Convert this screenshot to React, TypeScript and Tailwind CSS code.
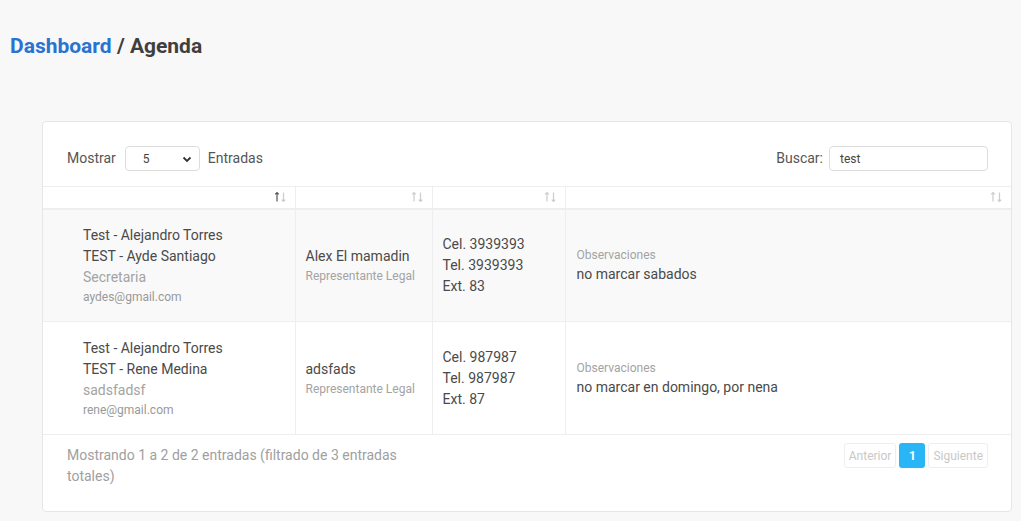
import React from "react";

// Agenda table rows shown after filtering by "test"
const ROWS = [
  {
    company: "Test - Alejandro Torres",
    contact: "TEST - Ayde Santiago",
    role: "Secretaria",
    email: "aydes@gmail.com",
    rep: "Alex El mamadin",
    cel: "3939393",
    tel: "3939393",
    ext: "83",
    notes: "no marcar sabados",
  },
  {
    company: "Test - Alejandro Torres",
    contact: "TEST - Rene Medina",
    role: "sadsfadsf",
    email: "rene@gmail.com",
    rep: "adsfads",
    cel: "987987",
    tel: "987987",
    ext: "87",
    notes: "no marcar en domingo, por nena",
  },
];

function SortIcon({ active = false }: { active?: boolean }) {
  return (
    <svg width="13" height="12" viewBox="0 0 13 12" className="shrink-0">
      {/* up arrow */}
      <path
        d="M3 1.5 L3 10.5 M1.2 3.3 L3 1.5 L4.8 3.3"
        fill="none"
        stroke={active ? "#555" : "#ccc"}
        strokeWidth="1.2"
      />
      {/* down arrow */}
      <path
        d="M9.5 1.5 L9.5 10.5 M7.7 8.7 L9.5 10.5 L11.3 8.7"
        fill="none"
        stroke="#ccc"
        strokeWidth="1.2"
      />
    </svg>
  );
}

export default function App() {
  return (
    <div
      className="min-h-screen bg-[#f8f8f8] pb-[10px] text-[#4a4a4a]"
      style={{ fontFamily: "Roboto, 'Liberation Sans', sans-serif" }}
    >
      {/* Breadcrumb title */}
      <h1 className="px-[10px] pt-[32px] text-[21px] font-bold leading-[28px]">
        <span className="text-[#2a72d1]">Dashboard</span>
        <span className="text-[#3f3f3f]"> / Agenda</span>
      </h1>

      <div className="ml-[42px] mr-[9px] mt-[61px] rounded-[4px] border border-[#e6e6e6] bg-white">
        {/* Controls */}
        <div className="flex items-center justify-between pl-[24px] pr-[23px] pt-[24px] pb-[15px] text-[14px] text-[#555]">
          <div className="flex items-center gap-[8px]">
            <span>Mostrar</span>
            <div className="ml-[1px] flex h-[25px] w-[75px] items-center justify-between rounded-[4px] border border-[#ddd] pl-[17px] pr-[6px] text-[12px] text-[#444]">
              <span>5</span>
              <svg width="12" height="12" viewBox="0 0 12 12">
                <path d="M2.5 4.5 L6 8 L9.5 4.5" fill="none" stroke="#333" strokeWidth="1.8" />
              </svg>
            </div>
            <span>Entradas</span>
          </div>
          <div className="flex items-center gap-[6px]">
            <span>Buscar:</span>
            <div className="flex h-[25px] w-[159px] items-center rounded-[4px] border border-[#ddd] px-[10px] text-[12px] text-[#444]">
              test
            </div>
          </div>
        </div>

        {/* Table */}
        <table className="w-full table-fixed border-collapse text-[14px] leading-[21px]">
          <colgroup>
            <col className="w-[252px]" />
            <col className="w-[137px]" />
            <col className="w-[133px]" />
            <col />
          </colgroup>
          <thead>
            <tr className="h-[22px] border-t border-b-2 border-[#eeeeee]">
              {[true, false, false, false].map((active, i) => (
                <th
                  key={i}
                  className={
                    "p-0 pr-[8px] align-middle " + (i < 3 ? "border-r border-[#eeeeee]" : "")
                  }
                >
                  <div className="flex justify-end">
                    <SortIcon active={active} />
                  </div>
                </th>
              ))}
            </tr>
          </thead>
          <tbody>
            {ROWS.map((r, i) => (
              <tr
                key={i}
                className={
                  "h-[113px] border-b border-[#eeeeee] " + (i === 0 ? "bg-[#f9f9f9]" : "bg-white")
                }
              >
                <td className="border-r border-[#eeeeee] pl-[40px] pt-[2px] align-middle">
                  <div>{r.company}</div>
                  <div>{r.contact}</div>
                  <div className="leading-[20px] text-[#a3a3a3]">{r.role}</div>
                  <div className="text-[12px] leading-[20px] text-[#999]">{r.email}</div>
                </td>
                <td className="border-r border-[#eeeeee] pl-[10px] align-middle">
                  <div>{r.rep}</div>
                  <div className="text-[12px] leading-[18px] text-[#a3a3a3]">
                    Representante Legal
                  </div>
                </td>
                <td className="border-r border-[#eeeeee] pl-[10px] align-middle">
                  <div>Cel. {r.cel}</div>
                  <div>Tel. {r.tel}</div>
                  <div>Ext. {r.ext}</div>
                </td>
                <td className="pl-[11px] align-middle">
                  <div className="text-[12px] leading-[18px] text-[#a3a3a3]">Observaciones</div>
                  <div>{r.notes}</div>
                </td>
              </tr>
            ))}
          </tbody>
        </table>

        {/* Footer */}
        <div className="flex items-start justify-between pl-[24px] pr-[23px] pt-[8px] pb-[24px]">
          <div className="w-[370px] pt-[2px] text-[14px] leading-[21px] text-[#a0a0a0]">
            Mostrando 1 a 2 de 2 entradas (filtrado de 3 entradas totales)
          </div>
          <div className="flex items-center gap-[3px] text-[12px]">
            <div className="flex h-[25px] items-center rounded-[3px] border border-[#eee] px-[4px] text-[#c8c8c8]">
              Anterior
            </div>
            <div className="flex h-[25px] w-[26px] items-center justify-center rounded-[3px] bg-[#29b6f6] font-bold text-white">
              1
            </div>
            <div className="flex h-[25px] items-center rounded-[3px] border border-[#eee] px-[4px] text-[#c8c8c8]">
              Siguiente
            </div>
          </div>
        </div>
      </div>
    </div>
  );
}
